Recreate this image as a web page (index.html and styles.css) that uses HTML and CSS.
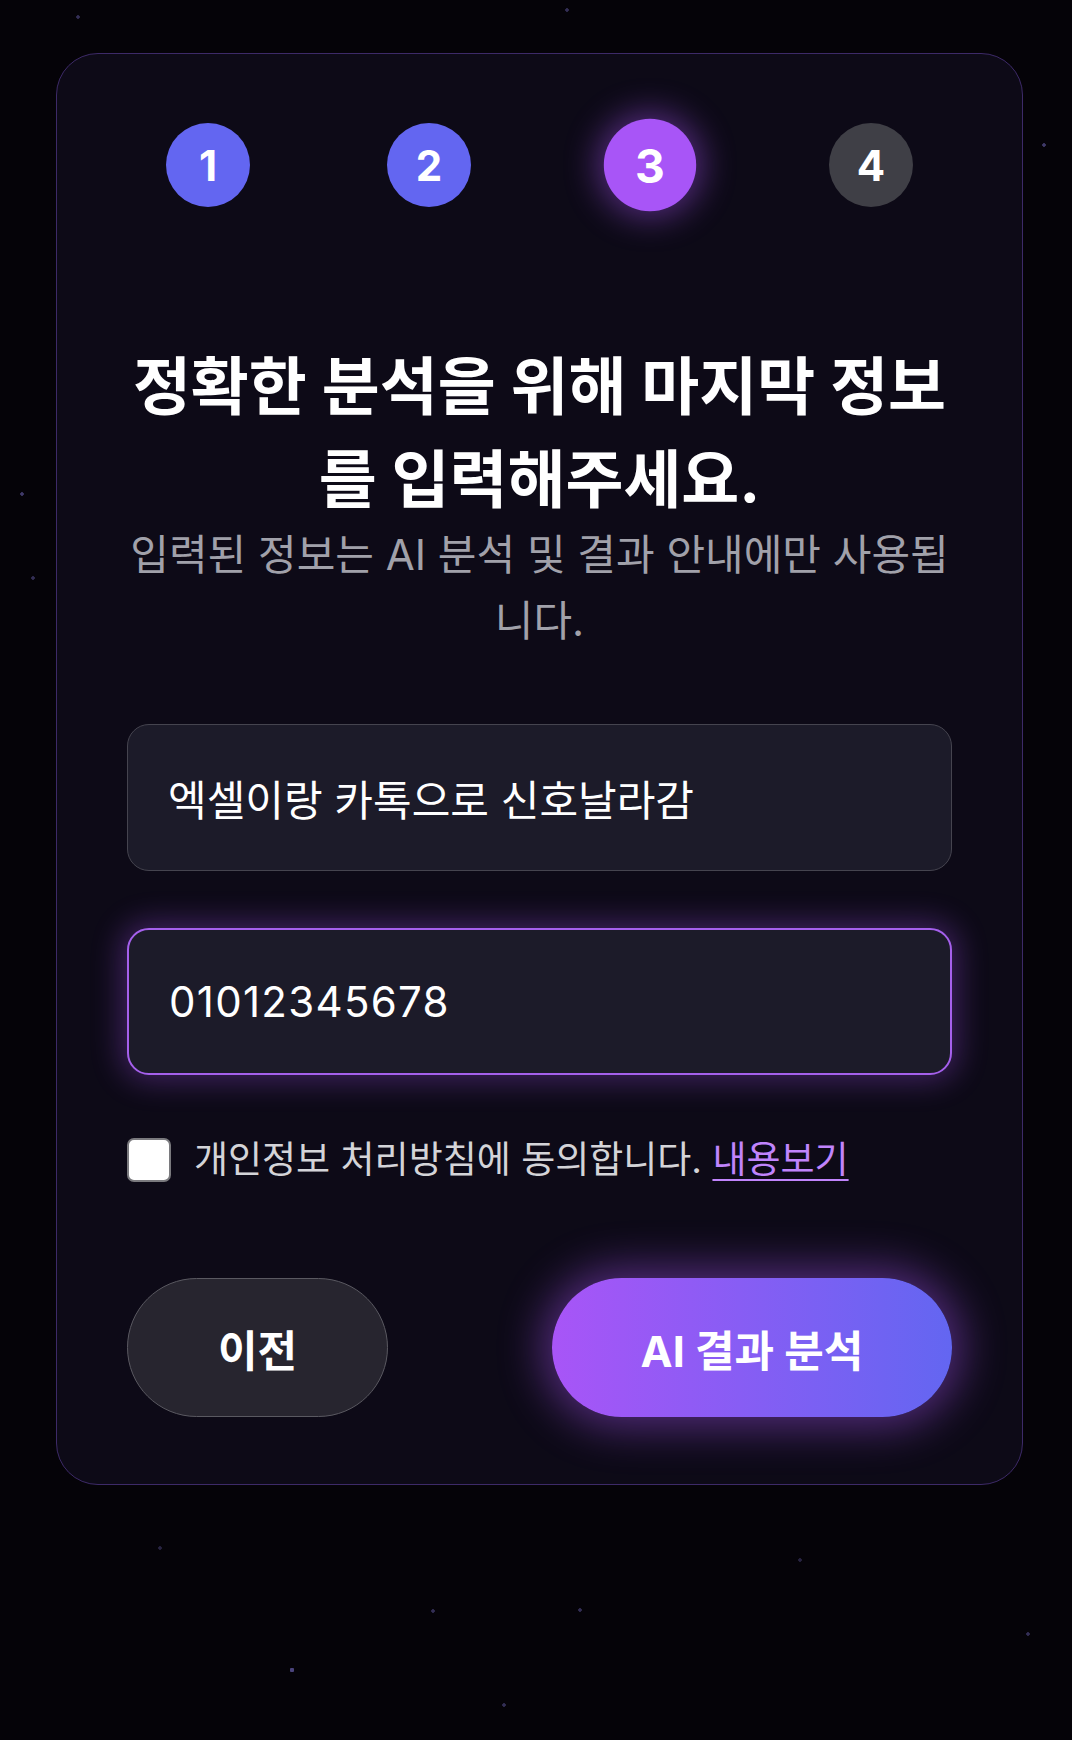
FILE: index.html
```html
<!DOCTYPE html>
<html lang="ko">
<head>
<meta charset="utf-8">
<title>AI 분석 - 정보 입력</title>
<link rel="stylesheet" href="styles.css">
</head>
<body>
<main class="card">
  <ol class="steps">
    <li class="step done">1</li>
    <li class="step done">2</li>
    <li class="step active">3</li>
    <li class="step todo">4</li>
  </ol>
  <h1 class="title">정확한 분석을 위해 마지막 정보<br>를 입력해주세요.</h1>
  <p class="subtitle">입력된 정보는 AI 분석 및 결과 안내에만 사용됩<br>니다.</p>
  <form class="form">
    <input class="field" type="text" value="엑셀이랑 카톡으로 신호날라감">
    <input class="field focused digits" type="tel" value="01012345678">
    <label class="agree">
      <input class="check" type="checkbox">
      <span class="agree-text">개인정보 처리방침에 동의합니다. <a class="link" href="#">내용보기</a></span>
    </label>
    <div class="actions">
      <button class="btn prev" type="button">이전</button>
      <button class="btn submit" type="button">AI 결과 분석</button>
    </div>
  </form>
</main>
</body>
</html>
```
FILE: styles.css
```css
html, body {
  margin: 0;
  padding: 0;
}
body {
  width: 1072px;
  min-height: 1740px;
  background-color: #050308;
  background-image:
    radial-gradient(circle at 1044px 145px, rgba(120,110,200,0.5) 0 1.5px, transparent 2px),
    radial-gradient(circle at 22px 494px, rgba(120,110,200,0.5) 0 1.5px, transparent 2px),
    radial-gradient(circle at 33px 578px, rgba(120,110,200,0.4) 0 1.5px, transparent 2px),
    radial-gradient(circle at 78px 17px, rgba(120,110,200,0.4) 0 1.5px, transparent 2px),
    radial-gradient(circle at 567px 10px, rgba(120,110,200,0.4) 0 1.5px, transparent 2px),
    radial-gradient(circle at 292px 1670px, rgba(120,110,200,0.6) 0 2px, transparent 2.5px),
    radial-gradient(circle at 433px 1611px, rgba(120,110,200,0.4) 0 1.5px, transparent 2px),
    radial-gradient(circle at 580px 1610px, rgba(120,110,200,0.4) 0 1.5px, transparent 2px),
    radial-gradient(circle at 1028px 1634px, rgba(120,110,200,0.4) 0 1.5px, transparent 2px),
    radial-gradient(circle at 504px 1705px, rgba(120,110,200,0.4) 0 1.5px, transparent 2px),
    radial-gradient(circle at 160px 1548px, rgba(120,110,200,0.3) 0 1.5px, transparent 2px),
    radial-gradient(circle at 800px 1560px, rgba(120,110,200,0.3) 0 1.5px, transparent 2px);
  font-family: "Inter", "Noto Sans CJK KR", sans-serif;
  color: #ffffff;
  padding-top: 53px;
  box-sizing: border-box;
}

.card {
  display: block;
  box-sizing: border-box;
  width: 967px;
  margin-left: 56px;
  padding: 69px 70px 67px;
  background: #0d0a17;
  border: 1.5px solid #3d2a68;
  border-radius: 42px;
}

.steps {
  list-style: none;
  margin: 0;
  padding: 0 39px;
  display: flex;
  justify-content: space-between;
  align-items: center;
}
.step {
  width: 84px;
  height: 84px;
  border-radius: 50%;
  display: flex;
  align-items: center;
  justify-content: center;
  font-size: 42px;
  font-weight: 700;
  color: #ffffff;
}
.step.done {
  background: #6366f1;
}
.step.active {
  background: #a855f7;
  transform: scale(1.1);
  box-shadow: 0 0 30px 6px rgba(168, 85, 247, 0.45);
}
.step.todo {
  background: #3f3f46;
}

.title {
  margin: 133px 0 0;
  text-align: center;
  white-space: nowrap;
  font-size: 63px;
  line-height: 93px;
  font-weight: 700;
  color: #ffffff;
}
.subtitle {
  margin: -4px 0 0;
  text-align: center;
  white-space: nowrap;
  font-size: 42px;
  line-height: 66px;
  font-weight: 400;
  color: #a1a1aa;
}

.form {
  margin-top: 70px;
  display: flex;
  flex-direction: column;
}
.field {
  box-sizing: border-box;
  width: 100%;
  height: 147px;
  padding: 0 40px;
  background: #1c1b29;
  border: 1.5px solid #45444f;
  border-radius: 22px;
  font-family: "Inter", "Noto Sans CJK KR", sans-serif;
  font-size: 42px;
  color: #ffffff;
  outline: none;
}
.field.digits {
  letter-spacing: 1.3px;
}
.field + .field {
  margin-top: 57px;
}
.field.focused {
  border: 2px solid #a560ec;
  box-shadow: 0 0 30px 6px rgba(168, 85, 247, 0.32);
}

.agree {
  margin-top: 63px;
  display: flex;
  align-items: center;
  gap: 23px;
}
.check {
  appearance: none;
  -webkit-appearance: none;
  margin: 0;
  width: 44px;
  height: 44px;
  box-sizing: border-box;
  background: #ffffff;
  border: 2.5px solid #7a7a7e;
  border-radius: 7px;
  flex: none;
}
.agree-text {
  font-size: 37px;
  line-height: 44px;
  color: #d4d4d8;
}
.link {
  color: #c084fc;
  text-decoration: underline;
  text-underline-offset: 6px;
  text-decoration-thickness: 2px;
}

.actions {
  margin-top: 96px;
  display: flex;
  justify-content: space-between;
}
.btn {
  height: 139px;
  border-radius: 70px;
  font-family: "Inter", "Noto Sans CJK KR", sans-serif;
  font-size: 43px;
  font-weight: 700;
  color: #ffffff;
  cursor: pointer;
}
.btn.prev {
  width: 261px;
  background: #27252f;
  border: 1.5px solid #5a5961;
}
.btn.submit {
  width: 400px;
  border: none;
  background: linear-gradient(90deg, #a855f7 0%, #6366f1 100%);
  box-shadow: 0 0 44px 10px rgba(168, 85, 247, 0.45);
}
```
